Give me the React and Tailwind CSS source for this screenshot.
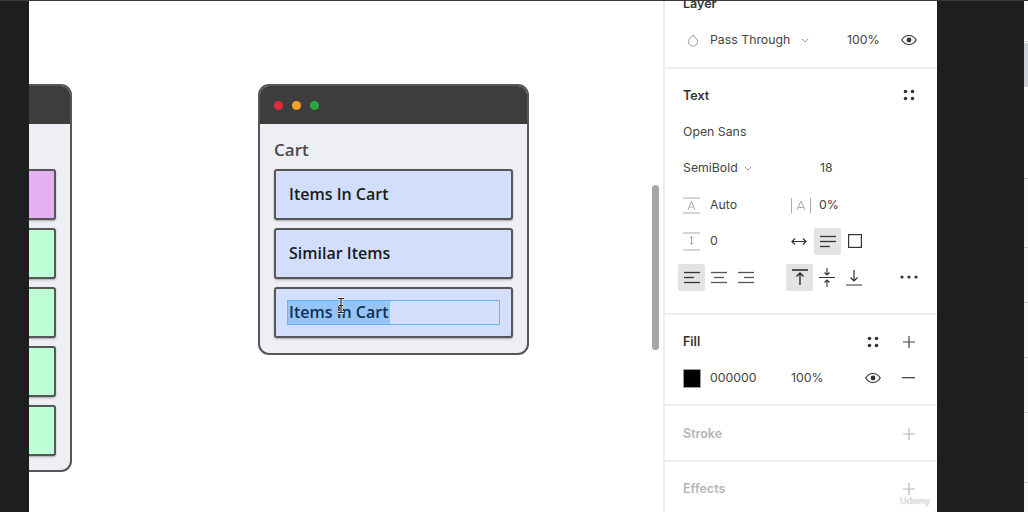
import React from 'react';

const Grip = ({ className = '' }) => (
  <svg width="12" height="12" viewBox="0 0 12 12" className={className} fill="#333">
    <circle cx="2.5" cy="2.5" r="1.8" />
    <circle cx="9.5" cy="2.5" r="1.8" />
    <circle cx="2.5" cy="9.5" r="1.8" />
    <circle cx="9.5" cy="9.5" r="1.8" />
  </svg>
);

const Plus = ({ color = '#444' }) => (
  <svg width="14" height="14" viewBox="0 0 14 14" stroke={color} strokeWidth="1.2" fill="none">
    <path d="M7 1v12M1 7h12" />
  </svg>
);

const Eye = () => (
  <svg width="16" height="12" viewBox="0 0 16 12" fill="none" stroke="#333" strokeWidth="1.2">
    <path d="M.8 6C2.5 3 5 1.5 8 1.5S13.500 3 15.200 6C13.500 9 11 10.500 8 10.500S2.500 9 .8 6Z" />
    <circle cx="8" cy="6" r="2.400" fill="#333" stroke="none" />
  </svg>
);

const Chevron = () => (
  <svg width="8" height="5" viewBox="0 0 8 5" fill="none" stroke="#999" strokeWidth="1">
    <path d="M.8.8 4 4 7.200.8" />
  </svg>
);

const Lines = ({ widths, align = 'left', color = '#333' }) => {
  // three bars, the middle one shorter
  const x = (w) => (align === 'left' ? 1 : align === 'center' ? 9 - w / 2 : 17 - w);
  return (
    <svg width="18" height="13" viewBox="0 0 18 13" stroke={color} strokeWidth="1.300">
      <path d={`M${x(widths[0])} 1.500h${widths[0]}`} />
      <path d={`M${x(widths[1])} 6.500h${widths[1]}`} />
      <path d={`M${x(widths[2])} 11.500h${widths[2]}`} />
    </svg>
  );
};

const WindowDots = () => (
  <div className="flex items-center gap-[9px] pl-[14px]">
    <span className="w-[9px] h-[9px] rounded-full bg-[#e32b3d]" />
    <span className="w-[9px] h-[9px] rounded-full bg-[#f3a424]" />
    <span className="w-[9px] h-[9px] rounded-full bg-[#2aa840]" />
  </div>
);

const Block = ({ color = 'bg-[#d2defb]', children, className = '' }) => (
  <div className={`h-[51px] shrink-0 rounded-[3px] border-2 border-[#565656] shadow-[0_1px_2px_rgba(0,0,0,0.3)] flex items-center ${color} ${className}`}>
    {children}
  </div>
);

const CartWindow = () => (
  <div className="absolute left-[229px] top-[83px] w-[271px] h-[271px] rounded-[11px] border-2 border-[#565656] bg-[#eeeff5] overflow-hidden flex flex-col">
    <div className="h-[38px] shrink-0 bg-[#3d3d3d] flex items-center">
      <WindowDots />
    </div>
    <div className="px-[14px] flex flex-col gap-2" style={{ fontFamily: '"Open Sans", sans-serif' }}>
      <div className="h-[27px] mt-[12px] -mb-[2px] flex items-center text-[17px] font-semibold text-[#4a4a4a]">Cart</div>
      <Block>
        <span className="pl-[13px] -mt-px text-[16px] font-semibold text-[#1a1a1a]">Items In Cart</span>
      </Block>
      <Block>
        <span className="pl-[13px] -mt-px text-[16px] font-semibold text-[#1a1a1a]">Similar Items</span>
      </Block>
      <Block>
        <div className="relative ml-[11px] w-[213px] h-[25px] border border-[#66b3f2] flex items-center">
          <span className="h-full bg-[#95c5f8] px-px text-[16px] leading-[22px] font-semibold text-[#12304f]">Items In Cart</span>
          {/* text cursor over the selection */}
          <svg className="absolute left-[48px] -top-[4px]" width="10" height="17" viewBox="0 0 10 17" fill="none">
            <path d="M2 1.500h6M2 15.500h6M5 1.500v14M3 8.500h4" stroke="#fff" strokeWidth="2.500" />
            <path d="M2 1.500h6M2 15.500h6M5 1.500v14M3 8.500h4" stroke="#222" strokeWidth="1.200" />
          </svg>
        </div>
      </Block>
    </div>
  </div>
);

const ListWindow = () => (
  <div className="absolute -left-[229px] top-[83px] w-[272px] h-[388px] rounded-[11px] border-2 border-[#565656] bg-[#eeeff5] overflow-hidden flex flex-col">
    <div className="h-[38px] shrink-0 bg-[#3d3d3d]" />
    <div className="mt-[45px] px-[14px] flex flex-col gap-2">
      <Block color="bg-[#e6b1f0]" />
      <Block color="bg-[#bfffd5]" />
      <Block color="bg-[#bfffd5]" />
      <Block color="bg-[#bfffd5]" />
      <Block color="bg-[#bfffd5]" />
    </div>
  </div>
);

const Canvas = () => (
  <div className="relative flex-1 bg-white overflow-hidden">
    <ListWindow />
    <CartWindow />
    <div className="absolute left-[623px] top-[184px] w-[7px] h-[165px] rounded-full bg-[#a6a6a6]" />
  </div>
);

const ToggleButton = ({ children, active }) => (
  <div className={`w-[27px] h-[27px] rounded-[2px] flex items-center justify-center ${active ? 'bg-[#e3e3e3]' : ''}`}>
    {children}
  </div>
);

const SideTitle = ({ children, muted }) => (
  <span className={`text-[12.500px] font-semibold ${muted ? 'text-[#b5b5b5]' : 'text-[#333]'}`}>{children}</span>
);

const Row = ({ children, className = '' }) => (
  <div className={`h-9 flex items-center ${className}`}>{children}</div>
);

const Panel = () => (
  <div
    className="w-[274px] shrink-0 bg-white border-l-2 border-[#eeeeee] overflow-hidden flex flex-col text-[12.300px] text-[#444]"
    style={{ fontFamily: 'Inter, sans-serif' }}
  >
    {/* Layer */}
    <section className="h-[68px] shrink-0 border-b-2 border-[#eeeeee] pl-[18px]">
      <div className="-mt-[6px] h-[18px] flex items-center"><SideTitle>Layer</SideTitle></div>
      <Row className="mt-[9px]">
        <svg className="ml-[4px] mr-[11px]" width="12" height="13" viewBox="0 0 12 13" fill="none" stroke="#aaa" strokeWidth="1.100">
          <path d="M6 1.200 9.500 5A4.400 4.400 0 1 1 2.500 5Z" />
        </svg>
        <span className="w-[91px]">Pass Through</span>
        <Chevron />
        <span className="ml-[38px] w-[54px]">100%</span>
        <Eye />
      </Row>
    </section>

    {/* Text */}
    <section className="h-[246px] shrink-0 border-b-2 border-[#eeeeee] pt-[9px] pl-[18px]">
      <Row>
        <SideTitle>Text</SideTitle>
        <Grip className="ml-[194px] -mt-[2px]" />
      </Row>
      <Row>Open Sans</Row>
      <Row>
        <span className="w-[61px]">SemiBold</span>
        <Chevron />
        <span className="ml-[68px]">18</span>
      </Row>
      <Row className="mt-px">
        <svg className="mr-[10px]" width="17" height="17" viewBox="0 0 17 17" fill="none" stroke="#aaa" strokeWidth="1">
          <path d="M0 1h17M0 16h17M5 13 8.500 4 12 13M6.300 10h4.400" />
        </svg>
        <span className="w-[81px]">Auto</span>
        <svg className="mr-[8px]" width="20" height="15" viewBox="0 0 20 15" fill="none" stroke="#aaa" strokeWidth="1">
          <path d="M.5 0v15M19.500 0v15M6 12 10 3l4 9M7.300 9.500h5.400" />
        </svg>
        <span>0%</span>
      </Row>
      <Row>
        <svg className="mr-[10px]" width="17" height="19" viewBox="0 0 17 19" fill="none" stroke="#aaa" strokeWidth="1">
          <path d="M0 1h17M0 18h17M8.500 4.500v8M6.800 6.300l1.700-1.800 1.700 1.800M6.800 10.700l1.700 1.800 1.700-1.800" />
        </svg>
        <span className="w-[81px]">0</span>
        <svg className="mr-[7px]" width="16" height="9" viewBox="0 0 16 9" fill="none" stroke="#333" strokeWidth="1.200">
          <path d="M1 4.500h14M4 1.500l-3 3 3 3M12 1.500l3 3-3 3" />
        </svg>
        <ToggleButton active><Lines widths={[16, 16, 10]} /></ToggleButton>
        <svg className="ml-[7px]" width="14" height="14" viewBox="0 0 14 14" fill="none" stroke="#333" strokeWidth="1.200">
          <rect x=".6" y=".6" width="12.800" height="12.800" />
        </svg>
      </Row>
      <Row className="-ml-[5px]">
        <ToggleButton active><Lines widths={[16, 10, 16]} /></ToggleButton>
        <ToggleButton><Lines widths={[16, 10, 16]} align="center" color="#555" /></ToggleButton>
        <ToggleButton><Lines widths={[16, 10, 16]} align="right" color="#555" /></ToggleButton>
        <div className="w-[27px]" />
        <ToggleButton active>
          <svg width="18" height="17" viewBox="0 0 18 17" fill="none" stroke="#222" strokeWidth="1.300">
            <path d="M1 1h16M9 16V4M5.500 7.500 9 4l3.500 3.500" />
          </svg>
        </ToggleButton>
        <ToggleButton>
          <svg width="16" height="19" viewBox="0 0 16 19" fill="none" stroke="#333" strokeWidth="1.100">
            <path d="M0 9.500h16M8 0v6.500M5.500 4.500 8 7l2.500-2.500M8 19v-6.500M5.500 14.500 8 12l2.500 2.500" />
          </svg>
        </ToggleButton>
        <ToggleButton>
          <svg width="18" height="17" viewBox="0 0 18 17" fill="none" stroke="#333" strokeWidth="1.200">
            <path d="M1 16h16M9 1v11M5.500 8.500 9 12l3.500-3.500" />
          </svg>
        </ToggleButton>
        <svg className="ml-[33px]" width="18" height="4" viewBox="0 0 18 4" fill="#333">
          <circle cx="2" cy="2" r="1.600" />
          <circle cx="9" cy="2" r="1.600" />
          <circle cx="16" cy="2" r="1.600" />
        </svg>
      </Row>
    </section>

    {/* Fill */}
    <section className="h-[91px] shrink-0 border-b-2 border-[#eeeeee] pt-[9px] pl-[18px]">
      <Row>
        <span className="w-[184px]"><SideTitle>Fill</SideTitle></span>
        <Grip />
        <span className="ml-[23px]"><Plus /></span>
      </Row>
      <Row>
        <span className="w-[18px] h-[19px] bg-black border border-[#999] rounded-[1px] mr-[9px]" />
        <span className="w-[81px]">000000</span>
        <span className="w-[74px]">100%</span>
        <Eye />
        <svg className="ml-[21px]" width="13" height="2" viewBox="0 0 13 2"><rect width="13" height="1.300" fill="#444" /></svg>
      </Row>
    </section>

    {/* Stroke */}
    <section className="h-[56px] shrink-0 border-b-2 border-[#eeeeee] pl-[18px] pt-[2px] flex items-center">
      <span className="w-[219px]"><SideTitle muted>Stroke</SideTitle></span>
      <Plus color="#b5b5b5" />
    </section>

    {/* Effects */}
    <section className="relative flex-1 pl-[18px]">
      <div className="h-[54px] flex items-center">
        <span className="w-[219px]"><SideTitle muted>Effects</SideTitle></span>
        <Plus color="#b5b5b5" />
      </div>
      <span className="absolute left-[235px] top-[32px] text-[9px] text-[#e6e6e6]" style={{ textShadow: '0 0 1px #aaa' }}>Udemy</span>
    </section>
  </div>
);

const RightStrip = () => (
  <div className="w-[4px] shrink-0 bg-[#f9f9fa] flex flex-col">
    <div className="h-[40px] shrink-0 bg-white" />
    <div className="h-px shrink-0 bg-[#d5d8df]" />
    <div className="h-px shrink-0 bg-white" />
    <div className="h-[44px] shrink-0 bg-[#d5d8df]" />
    <div className="h-[91px] shrink-0 bg-white" />
    <div className="h-px shrink-0 bg-[#d5d8df]" />
    <div className="mt-[68px] h-px shrink-0 bg-[#d5d8df]" />
    <div className="mt-[54px] h-px shrink-0 bg-[#d5d8df]" />
    <div className="mt-[54px] h-px shrink-0 bg-[#d5d8df]" />
    <div className="mt-[54px] h-px shrink-0 bg-[#d5d8df]" />
    <div className="mt-[69px] h-px shrink-0 bg-[#d5d8df]" />
  </div>
);

export default function App() {
  return (
    <div className="w-[1028px] h-[516px] overflow-hidden bg-white flex flex-col">
      <div className="h-px shrink-0 bg-[#3a3a3a]" />
      <div className="h-[511px] shrink-0 flex">
        <div className="w-[29px] shrink-0 bg-[#1d1e20]" />
        <Canvas />
        <Panel />
        <div className="w-[87px] shrink-0 bg-[#1d1e20]" />
        <RightStrip />
      </div>
    </div>
  );
}
